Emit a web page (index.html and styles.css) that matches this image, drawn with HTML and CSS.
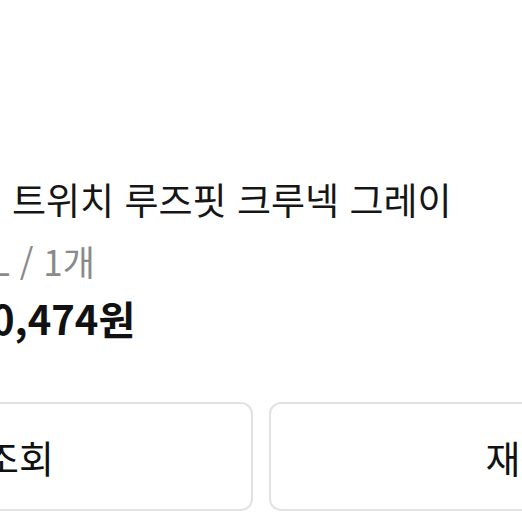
FILE: index.html
```html
<!DOCTYPE html>
<html lang="ko">
<head>
<meta charset="utf-8">
<link rel="stylesheet" href="styles.css">
</head>
<body>
<main class="page">
  <section class="item">
    <p class="title">트위치 루즈핏 크루넥 그레이</p>
    <p class="option">L / 1개</p>
    <p class="price">0,474원</p>
  </section>
  <div class="actions">
    <button class="btn">배송조회</button>
    <button class="btn">재구매</button>
  </div>
</main>
</body>
</html>
```
FILE: styles.css
```css
html, body {
  margin: 0;
  padding: 0;
  background: #ffffff;
  overflow: hidden;
}
body {
  width: 522px;
  height: 522px;
  font-family: "Noto Sans CJK KR", "Noto Sans", sans-serif;
  color: #111111;
}
.page {
  display: flex;
  flex-direction: column;
}
.item {
  display: flex;
  flex-direction: column;
  padding-top: 174px;
}
.title {
  margin: 0;
  white-space: nowrap;
  font-size: 37px;
  line-height: 50px;
  padding-left: 12px;
  color: #161616;
}
.option {
  margin: 13px 0 0 0;
  white-space: nowrap;
  font-size: 35px;
  line-height: 48px;
  color: #8a8a8a;
  text-indent: -9px;
}
.price {
  margin: 7px 0 0 0;
  white-space: nowrap;
  font-size: 40px;
  line-height: 52px;
  font-weight: 700;
  color: #111111;
  text-indent: -9px;
}
.actions {
  display: flex;
  gap: 16px;
  margin-top: 58px;
  margin-left: -285px;
  width: 1092px;
}
.btn {
  flex: 1;
  height: 109px;
  border: 2px solid #e2e2e2;
  border-radius: 12px;
  background: #ffffff;
  font-family: "Noto Sans CJK KR", "Noto Sans", sans-serif;
  font-size: 38px;
  color: #111111;
  padding: 0;
}
```
